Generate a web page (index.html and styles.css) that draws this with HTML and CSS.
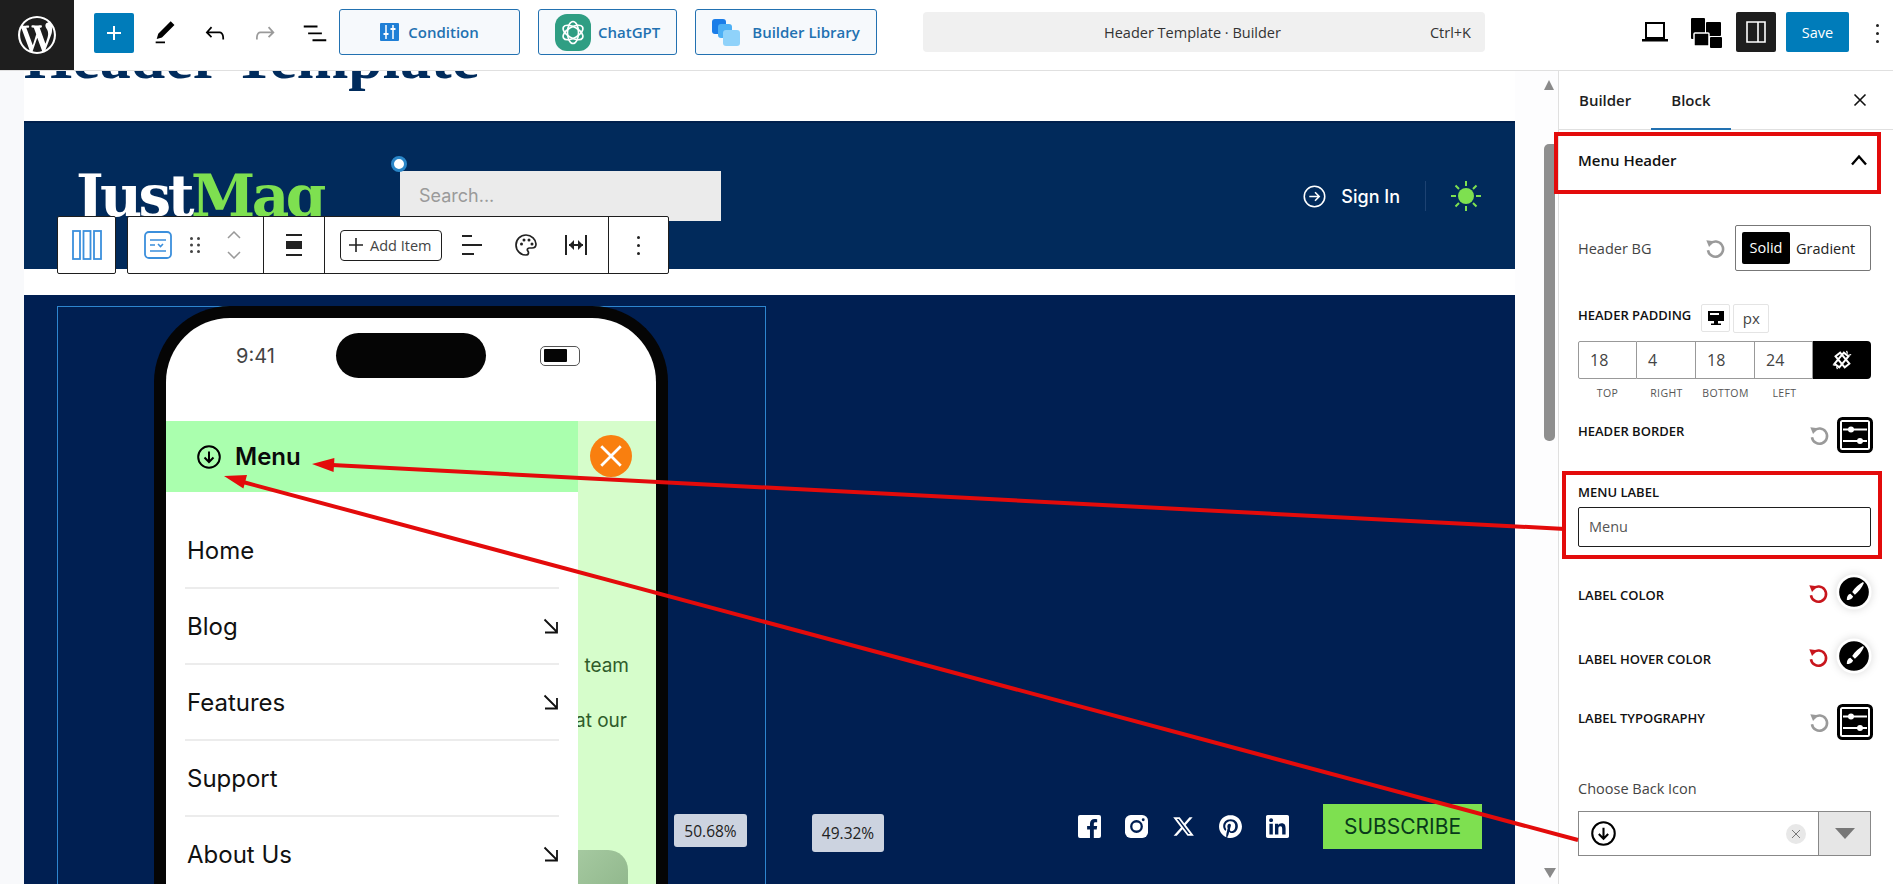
FILE: index.html
```html
<!DOCTYPE html>
<html lang="en">
<head>
  <meta charset="UTF-8">
  <title>Header Template · Builder</title>
  <link rel="stylesheet" href="styles.css">
</head>
<body>
  <svg class="defs" width="0" height="0">
    <symbol id="reset" viewBox="0 0 24 24"><path d="M6.5 7.5a8.3 8.3 0 1 1-2.2 7" fill="none" stroke="currentColor" stroke-width="2.8"/><path d="M2.5 3.5l8.5 1-5.5 6.5z" fill="currentColor"/></symbol>
    <symbol id="sliders" viewBox="0 0 36 36"><rect x="1.5" y="1.5" width="33" height="33" rx="4" fill="#fff" stroke="#000" stroke-width="3"/><rect x="5" y="5" width="26" height="26" fill="#000"/><path d="M6 12.500h24M6 24h24" stroke="#fff" stroke-width="1.800"/><circle cx="14" cy="12.500" r="3" fill="#fff"/><circle cx="23" cy="24" r="3" fill="#fff"/></symbol>
    <symbol id="brush" viewBox="0 0 40 40"><circle cx="20" cy="20" r="18" fill="#000" stroke="#fff" stroke-width="3"/><path d="M30 9c-4 2-9 6-12 11l3 3c4-3 8-8 10-13zM16 22c-3 1-4 3-4 7 3 0 6-1 7-4z" fill="#fff"/></symbol>
    <symbol id="se-arrow" viewBox="0 0 16 16"><path d="M1.500 1.500l12.500 12.500M14 4v10.500H2" fill="none" stroke="#111" stroke-width="1.800"/></symbol>
    <symbol id="circle-down" viewBox="0 0 24 24"><circle cx="12" cy="12" r="10.800" fill="none" stroke="#000" stroke-width="2"/><path d="M12 6.500v10.500M7.500 12.500l4.500 4.500 4.500-4.500" fill="none" stroke="#000" stroke-width="2"/></symbol>
  </svg>

  <header class="topbar">
    <a class="wp-logo">
      <svg viewBox="0 0 20 20" width="38" height="38"><path fill="#fff" d="M20 10c0-5.510-4.490-10-10-10C4.480 0 0 4.490 0 10c0 5.520 4.480 10 10 10 5.510 0 10-4.480 10-10zM7.780 15.370L4.370 6.220c.550-.020 1.170-.080 1.170-.080.500-.060.440-1.130-.060-1.110 0 0-1.450.110-2.370.110-.180 0-.370 0-.580-.010C4.120 2.690 6.870 1.110 10 1.110c2.330 0 4.450.870 6.050 2.340-.680-.110-1.650.390-1.650 1.580 0 .740.450 1.360.900 2.100.350.610.550 1.360.550 2.460 0 1.490-1.400 5-1.400 5l-3.030-8.370c.540-.020.820-.170.820-.170.500-.050.440-1.250-.060-1.220 0 0-1.440.120-2.380.120-.870 0-2.330-.120-2.330-.120-.500-.030-.560 1.200-.060 1.220l.920.080 1.260 3.410zM17.410 10c.240-.640.740-1.870.430-4.250.700 1.290 1.050 2.710 1.050 4.250 0 3.290-1.730 6.240-4.400 7.780.970-2.590 1.940-5.200 2.920-7.780zM6.100 18.090C3.120 16.650 1.110 13.530 1.110 10c0-1.300.230-2.480.720-3.590C3.250 10.300 4.670 14.200 6.100 18.090zm4.030-6.630l2.580 6.980c-.860.290-1.760.450-2.710.450-.790 0-1.570-.110-2.290-.330.810-2.380 1.620-4.740 2.420-7.100z"/></svg>
    </a>
    <button class="add-btn"><svg viewBox="0 0 24 24" width="24" height="24"><path fill="#fff" d="M11 5h2v6h6v2h-6v6h-2v-6H5v-2h6z"/></svg></button>
    <div class="tools">
      <span class="tool"><svg viewBox="0 0 24 24" width="28" height="28"><path d="M20.100 5.100L16.900 2 6.200 12.700l-1.300 4.400 4.500-1.300L20.100 5.100zM4 20.800h8v-1.500H4v1.500z"/></svg></span>
      <span class="tool"><svg viewBox="0 0 24 24" width="28" height="28"><path d="M18.300 11.700c-.6-.6-1.400-.9-2.300-.9H6.700l2.900-3.300-1.100-1-4.500 5L8.500 16l1-1-2.700-2.700H16c.5 0 .9.2 1.300.5 1 1 1 3.400 1 4.500v.3h1.500v-.2c0-1.500 0-4.300-1.500-5.700z"/></svg></span>
      <span class="tool"><svg viewBox="0 0 24 24" width="28" height="28"><path fill="#9a9a9a" d="M15.600 6.500l-1.100 1 2.900 3.300H8c-.9 0-1.700.3-2.300.9-1.400 1.500-1.400 4.200-1.400 5.600v.2h1.500v-.3c0-1.100 0-3.500 1-4.500.3-.3.7-.5 1.300-.5h9.200L14.500 15l1.100 1.100 4.600-4.600-4.600-5z"/></svg></span>
      <span class="tool"><svg viewBox="0 0 24 24" width="30" height="30"><path d="M3 6h11v1.500H3V6zm3.500 5.500h11V13h-11v-1.500zM21 17H10v1.500h11V17z"/></svg></span>
    </div>
    <button class="outline-btn condition">
      <svg viewBox="0 0 19 18" width="19" height="18"><rect width="19" height="18" rx="1" fill="#1f7fd6"/><path d="M6 2v14M13 2v14" stroke="#fff" stroke-width="1.500"/><path d="M3.500 11h5M10.500 6h5" stroke="#fff" stroke-width="2"/></svg>
      Condition
    </button>
    <button class="outline-btn chatgpt">
      <svg viewBox="0 0 36 37" width="36" height="37"><rect width="36" height="37" rx="12" fill="#2f9e83"/><g fill="none" stroke="#fff" stroke-width="1.600"><ellipse cx="18" cy="18.500" rx="5.500" ry="11"/><ellipse cx="18" cy="18.500" rx="5.500" ry="11" transform="rotate(60 18 18.500)"/><ellipse cx="18" cy="18.500" rx="5.500" ry="11" transform="rotate(120 18 18.500)"/></g></svg>
      ChatGPT
    </button>
    <button class="outline-btn library">
      <svg viewBox="0 0 29 27" width="29" height="27"><rect x="0" y="0" width="14" height="15" rx="3" fill="#1a7de8"/><rect x="6" y="5" width="14" height="14" rx="3" fill="#4db0f5"/><rect x="11" y="11" width="17" height="16" rx="3" fill="#8fd2fa"/></svg>
      Builder Library
    </button>
    <div class="command">
      <span class="command-title">Header Template · Builder</span>
      <span class="command-key">Ctrl+K</span>
    </div>
    <span class="laptop"><svg viewBox="0 0 26 24" width="26" height="24"><path d="M4 3h18v15H4z" fill="none" stroke="#000" stroke-width="2"/><path d="M0 19h26v2.500H0z"/></svg></span>
    <span class="devices"><svg viewBox="0 0 32 30" width="32" height="30"><rect x="1" y="0" width="14" height="21" rx="1"/><rect x="16" y="4" width="15" height="14" rx="1" /><rect x="4" y="15" width="15" height="13" rx="1" stroke="#fff" stroke-width="1.500"/><rect x="20" y="19" width="12" height="11" rx="1"/></svg></span>
    <span class="panel-toggle"><svg viewBox="0 0 20 24" width="20" height="24"><path d="M1 2h18v20H1z" fill="none" stroke="#fff" stroke-width="1.600"/><path d="M12 2v20" stroke="#fff" stroke-width="1.600"/></svg></span>
    <button class="save-btn">Save</button>
    <span class="more-dots"><i></i><i></i><i></i></span>
  </header>

  <div class="workspace">
    <main class="canvas">
      <div class="page">
        <h1 class="page-title">Header Template</h1>

        <section class="site-header">
          <div class="logo">Just<span>Mag</span></div>
          <div class="site-search">Search...</div>
          <div class="sign-in">
            <svg viewBox="0 0 22 22" width="23" height="23"><circle cx="11" cy="11" r="9.800" fill="none" stroke="#fff" stroke-width="1.500"/><path d="M6 11h9M11.500 7l4 4-4 4" fill="none" stroke="#fff" stroke-width="1.500"/></svg>
            Sign In
          </div>
          <span class="sign-divider"></span>
          <svg class="sun" viewBox="0 0 32 32" width="32" height="32"><circle cx="16" cy="16" r="8" fill="#7ee050"/><path d="M16 1v5M16 26v5M1 16h5M26 16h5M5.500 5.500l3.500 3.500M23 23l3.500 3.500M5.500 26.500L9 23M23 9l3.500-3.500" stroke="#7ee050" stroke-width="2"/></svg>
          <span class="dot-handle"></span>
        </section>

        <div class="block-toolbar">
          <div class="bt-group bt-first">
            <svg viewBox="0 0 30 30" width="30" height="30"><g fill="none" stroke="#3b8fdc" stroke-width="1.800"><rect x="1" y="1" width="7" height="28"/><rect x="11.500" y="1" width="7" height="28"/><rect x="22" y="1" width="7" height="28"/></g></svg>
          </div>
          <div class="bt-group bt-main">
            <div class="bt-cell bt-move">
              <svg viewBox="0 0 28 28" width="28" height="28"><rect x="1" y="1" width="26" height="26" rx="4" fill="none" stroke="#3b8fdc" stroke-width="1.800"/><path d="M6 9h16M6 14h5M6 20h16M14 13l2.500 2.500L19 13" fill="none" stroke="#3b8fdc" stroke-width="1.600"/></svg>
              <svg class="grip" viewBox="0 0 12 18" width="12" height="18"><g fill="#444"><circle cx="2.500" cy="2.500" r="1.500"/><circle cx="9.500" cy="2.500" r="1.500"/><circle cx="2.500" cy="9" r="1.500"/><circle cx="9.500" cy="9" r="1.500"/><circle cx="2.500" cy="15.500" r="1.500"/><circle cx="9.500" cy="15.500" r="1.500"/></g></svg>
              <svg class="updown" viewBox="0 0 16 28" width="16" height="28"><path d="M2 7l6-6 6 6M2 21l6 6 6-6" fill="none" stroke="#999" stroke-width="1.500"/></svg>
            </div>
            <div class="bt-cell bt-align">
              <svg viewBox="0 0 20 24" width="20" height="24"><path d="M2 1h16v2H2zM2 21h16v2H2z" fill="#222"/><rect x="2" y="8" width="16" height="8" fill="#222"/></svg>
            </div>
            <div class="bt-cell bt-items">
              <span class="add-item"><svg viewBox="0 0 14 14" width="14" height="14"><path d="M6.200 0h1.600v6.200H14v1.600H7.800V14H6.200V7.800H0V6.200h6.200z" fill="#222"/></svg>Add Item</span>
              <svg class="bt-icon" viewBox="0 0 22 24" width="22" height="24"><path d="M0 2h10v2H0zM0 11h20v2H0zM0 20h12v2H0z" fill="#222"/></svg>
              <svg class="bt-icon" viewBox="0 0 24 24" width="24" height="24"><path d="M12 2C6.500 2 2 6.500 2 12s4.500 10 10 10c1.700 0 2.500-1 2.500-2.200 0-1.500-1.200-1.800-1.200-3 0-1 .8-1.800 2-1.800H18c2.500 0 4-1.500 4-4 0-4.500-4.500-9-10-9z" fill="none" stroke="#222" stroke-width="1.700"/><circle cx="7.500" cy="11" r="1.500" fill="#222"/><circle cx="10" cy="7" r="1.500" fill="#222"/><circle cx="15" cy="7" r="1.500" fill="#222"/><circle cx="18" cy="11" r="1.500" fill="#222"/></svg>
              <svg class="bt-icon" viewBox="0 0 24 24" width="24" height="24"><path d="M2 2v20M22 2v20" stroke="#222" stroke-width="2"/><path d="M5 12h14" stroke="#222" stroke-width="2"/><path d="M10 7l-5 5 5 5zM14 7l5 5-5 5z" fill="#222"/></svg>
            </div>
            <div class="bt-cell bt-more"><span class="more-dots"><i></i><i></i><i></i></span></div>
          </div>
        </div>

        <div class="gap-strip"></div>

        <section class="hero">
          <div class="selected-col">
            <div class="phone">
              <div class="status">
                <span class="status-time">9:41</span>
                <span class="island"></span>
                <span class="battery"><i></i></span>
              </div>
              <div class="screen">
                <nav class="mobile-menu">
                  <div class="menu-head"><svg width="24" height="24"><use href="#circle-down"/></svg>Menu</div>
                  <ul class="menu-list">
                    <li>Home</li>
                    <li>Blog<svg width="16" height="16"><use href="#se-arrow"/></svg></li>
                    <li>Features<svg width="16" height="16"><use href="#se-arrow"/></svg></li>
                    <li>Support</li>
                    <li>About Us<svg width="16" height="16"><use href="#se-arrow"/></svg></li>
                  </ul>
                </nav>
                <div class="screen-behind">
                  <span class="close-circle"><svg viewBox="0 0 24 24" width="26" height="26"><path d="M3 3l18 18M21 3L3 21" stroke="#fff" stroke-width="2.600"/></svg></span>
                  <p class="behind-line first">team</p>
                  <p class="behind-line second">that our</p>
                  <div class="behind-img"></div>
                </div>
              </div>
            </div>
          </div>
          <span class="size-badge left">50.68%</span>
          <span class="size-badge right">49.32%</span>
          <div class="hero-side">
            <div class="socials">
              <svg viewBox="0 0 24 24" width="23" height="23"><rect width="24" height="24" rx="2" fill="#fff"/><path d="M16.500 24v-9h3l.5-3.500h-3.500V9.300c0-1 .4-1.700 1.800-1.700H20V4.400c-.4 0-1.500-.2-2.800-.2-2.800 0-4.700 1.700-4.700 4.800v2.500h-3V15h3v9z" fill="#001f52"/></svg>
              <svg viewBox="0 0 24 24" width="23" height="23"><rect width="24" height="24" rx="6" fill="#fff"/><circle cx="12" cy="12" r="5.500" fill="none" stroke="#001f52" stroke-width="2.400"/><circle cx="19" cy="5" r="1.500" fill="#001f52"/></svg>
              <svg viewBox="0 0 24 24" width="23" height="23"><path fill="#fff" d="M18.244 2.250h3.308l-7.227 8.260 8.502 11.240H16.170l-5.214-6.817L4.990 21.750H1.680l7.730-8.835L1.254 2.250H8.080l4.713 6.231zm-1.161 17.520h1.833L7.084 4.126H5.117z"/></svg>
              <svg viewBox="0 0 24 24" width="23" height="23"><path fill="#fff" d="M12.017 0C5.396 0 .029 5.367.029 11.987c0 5.079 3.158 9.417 7.618 11.162-.105-.949-.199-2.403.041-3.439.219-.937 1.406-5.957 1.406-5.957s-.359-.72-.359-1.781c0-1.663.967-2.911 2.168-2.911 1.024 0 1.518.769 1.518 1.688 0 1.029-.653 2.567-.992 3.992-.285 1.193.6 2.165 1.775 2.165 2.128 0 3.768-2.245 3.768-5.487 0-2.861-2.063-4.869-5.008-4.869-3.41 0-5.409 2.562-5.409 5.199 0 1.033.394 2.143.889 2.741.099.12.112.225.085.345-.09.375-.293 1.199-.334 1.363-.053.225-.172.271-.401.165-1.495-.69-2.433-2.878-2.433-4.646 0-3.776 2.748-7.252 7.92-7.252 4.158 0 7.392 2.967 7.392 6.923 0 4.135-2.607 7.462-6.233 7.462-1.214 0-2.354-.629-2.758-1.379l-.749 2.848c-.269 1.045-1.004 2.352-1.498 3.146 1.123.345 2.306.535 3.55.535 6.607 0 11.985-5.365 11.985-11.987C23.97 5.39 18.592.026 11.985.026L12.017 0z"/></svg>
              <svg viewBox="0 0 24 24" width="23" height="23"><path fill="#fff" d="M20.447 20.452h-3.554v-5.569c0-1.328-.027-3.037-1.852-3.037-1.853 0-2.136 1.445-2.136 2.939v5.667H9.351V9h3.414v1.561h.046c.477-.9 1.637-1.85 3.37-1.85 3.601 0 4.267 2.37 4.267 5.455v6.286zM5.337 7.433c-1.144 0-2.063-.926-2.063-2.065 0-1.138.92-2.063 2.063-2.063 1.14 0 2.064.925 2.064 2.063 0 1.139-.925 2.065-2.064 2.065zm1.782 13.019H3.555V9h3.564v11.452zM22.225 0H1.771C.792 0 0 .774 0 1.729v20.542C0 23.227.792 24 1.771 24h20.451C23.2 24 24 23.227 24 22.271V1.729C24 .774 23.2 0 22.222 0h.003z"/></svg>
            </div>
            <span class="subscribe">SUBSCRIBE</span>
          </div>
        </section>
      </div>
    </main>

    <div class="scroll-col">
      <span class="arrow-up"></span>
      <span class="thumb"></span>
      <span class="arrow-down"></span>
    </div>

    <aside class="sidebar">
      <div class="tabs">
        <span class="tab">Builder</span>
        <span class="tab active">Block</span>
        <svg class="tab-close" viewBox="0 0 14 14" width="14" height="14"><path d="M1.500 1.500l11 11M12.500 1.500l-11 11" stroke="#111" stroke-width="1.600"/></svg>
      </div>
      <div class="panel-head">
        <span>Menu Header</span>
        <svg viewBox="0 0 18 12" width="18" height="12"><path d="M2 10.500l7-8 7 8" fill="none" stroke="#000" stroke-width="2.400"/></svg>
      </div>

      <div class="row row-bg">
        <span class="plain-label">Header BG</span>
        <svg class="reset grey" width="22" height="22"><use href="#reset"/></svg>
        <div class="bg-switch"><span class="on">Solid</span><span>Gradient</span></div>
      </div>

      <div class="pad-head">
        <span class="ctl-label">HEADER PADDING</span>
        <span class="unit-box"><svg viewBox="0 0 18 18" width="18" height="18"><path d="M1 2h16v10H1zM7 12h4v2.500h3V16H4v-1.500h3z"/><path d="M3 4h9v2H3z" fill="#fff"/></svg></span>
        <span class="unit-box px">px</span>
      </div>
      <div class="pad-inputs">
        <span>18</span><span>4</span><span>18</span><span>24</span>
        <span class="link-cell"><svg viewBox="0 0 24 24" width="22" height="22"><path d="M5 8l5-4 10 12-5 4zM19 8l-5-4L4 16l5 4z" fill="none" stroke="#fff" stroke-width="2.200"/><path d="M17 2l1 3M22 6l-3 1M2 17l3 1M7 22l-1-3" stroke="#fff" stroke-width="1.400"/></svg></span>
      </div>
      <div class="pad-caps">
        <span>TOP</span><span>RIGHT</span><span>BOTTOM</span><span>LEFT</span>
      </div>

      <div class="row row-border">
        <span class="ctl-label">HEADER BORDER</span>
        <svg class="reset grey" width="22" height="22"><use href="#reset"/></svg>
        <svg class="slider-box" width="36" height="36"><use href="#sliders"/></svg>
      </div>

      <div class="menu-label">
        <span class="ctl-label">MENU LABEL</span>
        <div class="text-input">Menu</div>
      </div>

      <div class="row row-color first">
        <span class="ctl-label">LABEL COLOR</span>
        <svg class="reset red" width="22" height="22"><use href="#reset"/></svg>
        <svg class="brush" width="36" height="36"><use href="#brush"/></svg>
      </div>
      <div class="row row-color second">
        <span class="ctl-label">LABEL HOVER COLOR</span>
        <svg class="reset red" width="22" height="22"><use href="#reset"/></svg>
        <svg class="brush" width="36" height="36"><use href="#brush"/></svg>
      </div>
      <div class="row row-typo">
        <span class="ctl-label">LABEL TYPOGRAPHY</span>
        <svg class="reset grey" width="22" height="22"><use href="#reset"/></svg>
        <svg class="slider-box" width="36" height="36"><use href="#sliders"/></svg>
      </div>

      <div class="plain-label choose">Choose Back Icon</div>
      <div class="icon-select">
        <span class="icon-value"><svg width="25" height="25"><use href="#circle-down"/></svg></span>
        <span class="icon-clear"><svg viewBox="0 0 10 10" width="10" height="10"><path d="M1 1l8 8M9 1l-8 8" stroke="#777" stroke-width="1"/></svg></span>
        <span class="icon-drop"><i></i></span>
      </div>
    </aside>
  </div>

  <!-- red notes drawn over the screenshot -->
  <svg class="notes" width="1893" height="884" viewBox="0 0 1893 884">
    <g fill="none" stroke="#e30b0b" stroke-width="4">
      <rect x="1556" y="134" width="323" height="58"/>
      <rect x="1564" y="473" width="316" height="84"/>
      <path d="M1565 529L332 465"/>
      <path d="M1578 840L243 482"/>
    </g>
    <g fill="#e30b0b">
      <polygon points="312,464 334.400,458 333.600,472"/>
      <polygon points="224,476 247,474.900 243.400,488.500"/>
    </g>
  </svg>
</body>
</html>
```

FILE: styles.css
```css
* { box-sizing: border-box; }
html, body { margin: 0; height: 884px; overflow: hidden; }
body { font-family: "Open Sans", sans-serif; color: #1e1e1e; background: #fff; position: relative; }
button { font-family: inherit; cursor: pointer; }
.defs { position: absolute; }

/* top bar */
.topbar {
  height: 71px;
  display: flex;
  align-items: center;
  border-bottom: 1px solid #e0e0e0;
  background: #fff;
  position: relative;
  z-index: 5;
}
.wp-logo {
  width: 74px;
  height: 70px;
  background: #1e1e1e;
  display: flex;
  align-items: center;
  justify-content: center;
}
.add-btn {
  width: 40px;
  height: 40px;
  margin-left: 20px;
  margin-top: -4px;
  border: 0;
  border-radius: 2px;
  background: #007cba;
  display: flex;
  align-items: center;
  justify-content: center;
  padding: 0;
}
.tools { display: flex; margin-left: 6px; margin-top: -4px; }
.tool { width: 50px; height: 40px; display: flex; align-items: center; justify-content: center; }
.outline-btn {
  height: 46px;
  margin-top: -6px;
  border: 1px solid #2271b1;
  border-radius: 3px;
  background: #f6f9fc;
  color: #2271b1;
  font-size: 15px;
  font-weight: 600;
  display: flex;
  align-items: center;
  justify-content: center;
  gap: 9px;
  padding: 0;
}
.condition { width: 181px; margin-left: -1px; }
.chatgpt { width: 139px; margin-left: 18px; gap: 7px; justify-content: flex-start; padding-left: 16px; }
.library { width: 182px; margin-left: 18px; gap: 11px; }
.command {
  width: 562px;
  height: 40px;
  margin-left: 46px;
  margin-top: -6px;
  border-radius: 4px;
  background: #f0f0f0;
  display: flex;
  align-items: center;
  font-size: 14.5px;
  color: #333;
}
.command-title { margin-left: 181px; }
.command-key { margin-left: auto; margin-right: 14px; }
.laptop { margin-left: 157px; margin-top: -6px; display: flex; }
.devices { margin-left: 22px; margin-top: -4px; display: flex; }
.panel-toggle {
  width: 40px;
  height: 40px;
  margin-left: 14px;
  margin-top: -6px;
  background: #1e1e1e;
  border-radius: 2px;
  display: flex;
  align-items: center;
  justify-content: center;
}
.save-btn {
  width: 63px;
  height: 40px;
  margin-left: 10px;
  margin-top: -6px;
  border: 0;
  border-radius: 2px;
  background: #007cba;
  color: #fff;
  font-size: 14.5px;
  padding: 0;
}
.more-dots { display: flex; flex-direction: column; gap: 5px; }
.more-dots i { width: 3px; height: 3px; border-radius: 50%; background: #222; display: block; }
.topbar .more-dots { margin-left: 27px; margin-top: -4px; }

/* canvas */
.workspace { display: flex; height: 813px; }
.canvas { width: 1515px; padding-left: 24px; background: #f8f9fb; overflow: hidden; }
.page { background: #fff; height: 100%; position: relative; display: flow-root; }
.page-title {
  margin: -44px 0 34px;
  font-family: "Liberation Serif", serif;
  font-size: 62px;
  line-height: 60px;
  font-weight: 700;
  color: #002b5c;
  white-space: nowrap;
}
.site-header {
  height: 148px;
  background: #012a5b;
  border-top: 2px solid #00204d;
  display: flex;
  align-items: center;
  padding: 0 33px 0 52px;
  position: relative;
}
.logo {
  width: 324px;
  font-family: "DejaVu Serif", serif;
  font-size: 58px;
  line-height: 64px;
  font-weight: 700;
  color: #fff;
  letter-spacing: -3.500px;
}
.logo span { color: #7ee050; }
.site-search {
  width: 321px;
  height: 50px;
  background: #ebebeb;
  color: #9a9a9a;
  font-family: Inter, sans-serif;
  font-size: 18px;
  line-height: 50px;
  padding-left: 19px;
}
.sign-in {
  margin-left: auto;
  display: flex;
  align-items: center;
  gap: 15px;
  color: #fff;
  font-family: Inter, sans-serif;
  font-size: 18px;
  font-weight: 500;
}
.sign-divider { width: 1px; height: 30px; background: #1d4272; margin: 0 24px 0 25px; }
.dot-handle {
  position: absolute;
  left: 367px;
  top: 33px;
  width: 16px;
  height: 16px;
  border-radius: 50%;
  background: #fff;
  border: 3px solid #2a86c8;
}
.gap-strip { height: 26px; background: #fff; }

/* floating block toolbar */
.block-toolbar {
  position: absolute;
  left: 33px;
  top: 145px;
  display: flex;
  gap: 11px;
  z-index: 2;
}
.bt-group {
  height: 58px;
  background: #fff;
  border: 1px solid #1e1e1e;
  border-radius: 2px;
  display: flex;
  align-items: center;
}
.bt-first { width: 59px; justify-content: center; }
.bt-main { width: 542px; align-items: stretch; }
.bt-cell { display: flex; align-items: center; border-right: 1px solid #1e1e1e; }
.bt-cell:last-child { border-right: 0; }
.bt-move { width: 136px; padding-left: 16px; }
.grip { margin-left: 17px; }
.updown { margin-left: 25px; }
.bt-align { width: 61px; justify-content: center; }
.bt-items { width: 284px; padding-left: 15px; }
.bt-more { flex: 1; justify-content: center; }
.add-item {
  width: 102px;
  height: 31px;
  border: 1px solid #1e1e1e;
  border-radius: 4px;
  display: flex;
  align-items: center;
  gap: 7px;
  padding-left: 8px;
  font-size: 14.5px;
  color: #444;
}
.bt-items .bt-icon:nth-child(2) { margin-left: 20px; }
.bt-items .bt-icon:nth-child(3) { margin-left: 30px; }
.bt-items .bt-icon:nth-child(4) { margin-left: 26px; }

/* hero with the phone */
.hero {
  height: 589px;
  background: #001f52;
  display: flex;
  position: relative;
  overflow: hidden;
}
.selected-col {
  width: 709px;
  margin: 11px 0 0 33px;
  border: 1px solid #2d85cf;
  border-bottom: 0;
  flex: none;
}
.phone {
  width: 514px;
  height: 700px;
  margin: -1px 0 0 96px;
  border: 12px solid #050505;
  border-bottom: 0;
  border-radius: 76px 76px 0 0;
  background: #fff;
  overflow: hidden;
}
.status { height: 45px; margin: 15px 0 43px; display: flex; align-items: center; }
.status-time { width: 100px; margin-left: 70px; font-family: Inter, sans-serif; font-size: 20px; color: #444; }
.island { width: 150px; height: 45px; border-radius: 23px; background: #050505; }
.battery {
  width: 40px;
  height: 20px;
  margin-left: 54px;
  border: 1.5px solid #555;
  border-radius: 5px;
  padding: 2.5px;
}
.battery i { display: block; width: 70%; height: 100%; background: #050505; border-radius: 1px; }
.screen { display: flex; font-family: Inter, sans-serif; }
.mobile-menu { width: 413px; background: #fff; height: 470px; }
.menu-head {
  height: 71px;
  background: #aaffae;
  display: flex;
  align-items: center;
  gap: 14px;
  padding-left: 31px;
  font-size: 24px;
  font-weight: 600;
  color: #0a0a0a;
}
.menu-list { list-style: none; margin: 21px 19px 0; padding: 0; }
.menu-list li {
  height: 76px;
  display: flex;
  align-items: center;
  justify-content: space-between;
  border-bottom: 2px solid #ececec;
  font-size: 24px;
  padding-left: 2px;
  color: #111;
}
.screen-behind { width: 78px; background: #d6fdcb; height: 470px; overflow: hidden; }
.close-circle {
  width: 42px;
  height: 42px;
  margin: 14px 0 0 12px;
  border-radius: 50%;
  background: #f97f0f;
  display: flex;
  align-items: center;
  justify-content: center;
}
.behind-line {
  margin: 0;
  height: 24px;
  line-height: 24px;
  font-size: 19px;
  color: #2f5c2a;
  white-space: nowrap;
  display: flex;
  justify-content: flex-end;
}
.behind-line.first { margin-top: 177px; padding-right: 27px; }
.behind-line.second { margin-top: 31px; padding-right: 29px; }
.behind-img {
  width: 50px;
  height: 120px;
  margin-top: 117px;
  border-radius: 0 20px 0 0;
  background: linear-gradient(135deg, #a5c9a0, #7fa87b);
}
.size-badge {
  position: absolute;
  top: 519px;
  background: #ccd3e0;
  border-radius: 3px;
  font-family: "Open Sans", sans-serif;
  font-size: 15.5px;
  color: #222;
  display: flex;
  align-items: center;
  justify-content: center;
}
.size-badge.left { left: 650px; width: 73px; height: 33px; }
.size-badge.right { left: 788px; width: 72px; height: 38px; }
.hero-side {
  flex: 1;
  display: flex;
  justify-content: flex-end;
  align-items: flex-start;
  padding: 509px 33px 0 0;
}
.socials { display: flex; gap: 24px; margin: 11px 34px 0 0; }
.subscribe {
  width: 159px;
  height: 45px;
  background: #7ee050;
  color: #083a1a;
  font-family: Inter, sans-serif;
  font-size: 21px;
  display: flex;
  align-items: center;
  justify-content: center;
}

/* fake scrollbar */
.scroll-col {
  width: 43px;
  background: #fdfdfe;
  display: flex;
  flex-direction: column;
  align-items: flex-start;
  padding: 9px 0 6px 29px;
}
.arrow-up { width: 0; height: 0; border: 5px solid transparent; border-top: 0; border-bottom: 10px solid #8a8a8a; }
.thumb { width: 11px; height: 297px; margin-top: 54px; background: #8f8f8f; border-radius: 5px 0 5px 5px; }
.arrow-down { width: 0; height: 0; margin-top: auto; border: 6px solid transparent; border-bottom: 0; border-top: 10px solid #8a8a8a; }

/* sidebar */
.sidebar { width: 335px; border-left: 1px solid #e0e0e0; background: #fff; padding: 0 22px 0 19px; }
.tabs {
  height: 59px;
  margin: 0 -22px 0 -19px;
  padding-left: 20px;
  display: flex;
  align-items: center;
  gap: 40px;
  border-bottom: 1px solid #e0e0e0;
  position: relative;
}
.tab { font-size: 15px; font-weight: 600; color: #1e1e1e; height: 100%; display: flex; align-items: center; }
.tab.active { position: relative; }
.tab.active::after {
  content: "";
  position: absolute;
  left: -20px;
  right: -20px;
  bottom: -1px;
  height: 2px;
  background: #2271b1;
}
.tab-close { position: absolute; left: 294px; top: 22px; }
.panel-head {
  height: 60px;
  display: flex;
  align-items: center;
  justify-content: space-between;
  font-size: 15px;
  font-weight: 600;
  color: #111;
}
.panel-head svg { margin-right: 3px; }
.row { display: flex; align-items: center; }
.row-bg { height: 46px; margin-top: 35px; }
.plain-label { font-size: 14.500px; color: #444; }
.reset { margin-left: auto; }
.reset.grey { color: #9a9a9a; }
.reset.red { color: #c8161d; }
.bg-switch {
  width: 136px;
  height: 46px;
  margin-left: 9px;
  border: 1px solid #777;
  border-radius: 2px;
  display: flex;
  align-items: center;
  gap: 6px;
  padding-left: 6px;
  font-size: 14.500px;
  color: #222;
}
.bg-switch .on { width: 48px; height: 32px; background: #000; color: #fff; border-radius: 2px; text-align: center; line-height: 32px; }
.pad-head { display: flex; align-items: center; height: 30px; margin-top: 32px; }
.pad-head .ctl-label { margin-top: -6px; }
.ctl-label { font-size: 13px; font-weight: 600; color: #111; white-space: nowrap; }
.unit-box {
  width: 29px;
  height: 28px;
  margin-left: 10px;
  border: 1px solid #e4e4e4;
  border-radius: 2px;
  display: flex;
  align-items: center;
  justify-content: center;
}
.unit-box.px { width: 36px; height: 29px; margin-left: 3px; font-size: 15px; color: #444; }
.pad-inputs {
  height: 38px;
  margin-top: 8px;
  display: grid;
  grid-template-columns: 59px 59px 59px 58px 58px;
  font-size: 16px;
  color: #444;
}
.pad-inputs span {
  border: 1px solid #999;
  border-left: 0;
  display: flex;
  align-items: center;
  justify-content: flex-start;
  padding-left: 11px;
}
.pad-inputs span:first-child { border-left: 1px solid #999; border-radius: 2px 0 0 2px; }
.pad-inputs .link-cell { background: #000; border: 0; border-radius: 0 4px 4px 0; justify-content: center; padding: 0; }
.pad-caps {
  height: 16px;
  margin-top: 6px;
  display: grid;
  grid-template-columns: repeat(4, 59px);
  font-size: 10.500px;
  letter-spacing: .4px;
  color: #555;
  text-align: center;
  line-height: 16px;
}
.row-border { height: 36px; margin-top: 16px; }
.row-border .ctl-label, .row-typo .ctl-label { margin-top: -8px; }
.slider-box { margin-left: 7px; margin-right: -2px; }
.menu-label { margin-top: 30px; }
.menu-label .ctl-label { display: block; height: 18px; line-height: 18px; }
.text-input {
  height: 40px;
  margin-top: 6px;
  border: 1px solid #1e1e1e;
  border-radius: 2px;
  padding-left: 10px;
  font-size: 14.500px;
  line-height: 38px;
  color: #555;
}
.row-color { height: 36px; }
.row-color.first { margin-top: 27px; }
.row-color.second { margin-top: 28px; }
.row-color .ctl-label { margin-top: 6px; }
.row-color .reset { margin-top: 2px; }
.brush { margin-left: 7px; margin-right: -1px; filter: drop-shadow(0 0 4px rgba(0, 0, 0, .15)); }
.row-typo { height: 36px; margin-top: 30px; }
.choose { height: 20px; line-height: 20px; margin-top: 39px; }
.icon-select {
  height: 45px;
  margin-top: 12px;
  border: 1px solid #888;
  display: flex;
  align-items: center;
}
.icon-value { margin-left: 12px; display: flex; }
.icon-clear {
  width: 20px;
  height: 20px;
  margin-left: auto;
  margin-right: 12px;
  border-radius: 50%;
  background: #e8e8e8;
  display: flex;
  align-items: center;
  justify-content: center;
}
.icon-drop {
  width: 52px;
  height: 100%;
  background: #e6e6e6;
  border-left: 1px solid #888;
  display: flex;
  align-items: center;
  justify-content: center;
}
.icon-drop i { width: 0; height: 0; border: 10px solid transparent; border-bottom: 0; border-top: 11px solid #777; }

/* annotations lying over everything */
.notes { position: absolute; left: 0; top: 0; z-index: 9; pointer-events: none; }
```
